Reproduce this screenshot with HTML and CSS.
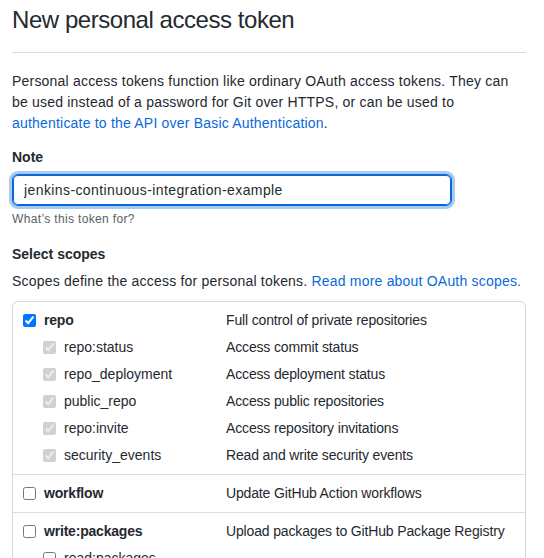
FILE: index.html
```html
<!DOCTYPE html>
<html lang="en">
<head>
<meta charset="utf-8">
<title>New personal access token</title>
<link rel="stylesheet" href="styles.css">
</head>
<body>
<div class="page">
  <div class="subhead">
    <h1 class="subhead-heading">New personal access token</h1>
  </div>
  <p class="intro">Personal access tokens function like ordinary OAuth access tokens. They can be used instead of a password for Git over HTTPS, or can be used to <a href="#">authenticate to the API over Basic Authentication</a>.</p>

  <div class="form-group">
    <label class="field-label" for="note">Note</label>
    <input class="text-input" id="note" type="text" value="jenkins-continuous-integration-example">
    <p class="field-note">What’s this token for?</p>
  </div>

  <h2 class="field-label scopes-title">Select scopes</h2>
  <p class="scopes-desc">Scopes define the access for personal tokens. <a href="#">Read more about OAuth scopes.</a></p>

  <div class="scopes">
    <div class="group">
      <div class="row">
        <label class="scope main"><input type="checkbox" checked><span>repo</span></label>
        <span class="desc">Full control of private repositories</span>
      </div>
      <div class="row">
        <label class="scope sub"><input type="checkbox" checked disabled><span>repo:status</span></label>
        <span class="desc">Access commit status</span>
      </div>
      <div class="row">
        <label class="scope sub"><input type="checkbox" checked disabled><span>repo_deployment</span></label>
        <span class="desc">Access deployment status</span>
      </div>
      <div class="row">
        <label class="scope sub"><input type="checkbox" checked disabled><span>public_repo</span></label>
        <span class="desc">Access public repositories</span>
      </div>
      <div class="row">
        <label class="scope sub"><input type="checkbox" checked disabled><span>repo:invite</span></label>
        <span class="desc">Access repository invitations</span>
      </div>
      <div class="row">
        <label class="scope sub"><input type="checkbox" checked disabled><span>security_events</span></label>
        <span class="desc">Read and write security events</span>
      </div>
    </div>
    <div class="group">
      <div class="row">
        <label class="scope main"><input type="checkbox"><span>workflow</span></label>
        <span class="desc">Update GitHub Action workflows</span>
      </div>
    </div>
    <div class="group">
      <div class="row">
        <label class="scope main"><input type="checkbox"><span>write:packages</span></label>
        <span class="desc">Upload packages to GitHub Package Registry</span>
      </div>
      <div class="row">
        <label class="scope sub"><input type="checkbox"><span>read:packages</span></label>
        <span class="desc"></span>
      </div>
    </div>
  </div>
</div>
</body>
</html>
```

FILE: styles.css
```css
html, body {
  margin: 0;
  padding: 0;
  overflow: hidden;
  background: #ffffff;
}

body {
  font-family: "Liberation Sans", Arial, sans-serif;
  font-size: 14px;
  line-height: 21px;
  color: #24292f;
}

a {
  color: #0969da;
  text-decoration: none;
}

.page {
  padding: 5px 18px 0 12px;
}

.subhead {
  padding-bottom: 17px;
  border-bottom: 1px solid #d8dee4;
}

.subhead-heading {
  margin: 0;
  font-size: 24px;
  line-height: 30px;
  font-weight: 400;
  letter-spacing: -0.45px;
}

.intro {
  margin: 18px 0 0;
  letter-spacing: 0.2px;
}

.form-group {
  margin-top: 13px;
}

.field-label {
  display: block;
  margin: 0 0 6px;
  font-size: 14px;
  line-height: 21px;
  font-weight: 700;
}

.text-input {
  display: block;
  box-sizing: border-box;
  width: 440px;
  height: 32px;
  margin: 0;
  padding: 5px 11px;
  font-family: inherit;
  font-size: 14px;
  line-height: 20px;
  letter-spacing: 0.4px;
  color: #24292f;
  background: #ffffff;
  border: 1px solid #0969da;
  border-radius: 6px;
  box-shadow: inset 0 0 0 1px #0969da, 0 0 0 3px rgba(9, 105, 218, 0.35);
  outline: none;
}

.field-note {
  margin: 4px 0 0;
  font-size: 12px;
  line-height: 18px;
  letter-spacing: 0.35px;
  color: #57606a;
}

.scopes-title {
  margin: 16px 0 0;
}

.scopes-desc {
  margin: 6px 0 0;
  letter-spacing: 0.2px;
}

.scopes {
  margin-top: 9px;
  border: 1px solid #d0d7de;
  border-radius: 6px;
}

.group {
  padding: 5px 0;
  border-top: 1px solid #d8dee4;
}

.group:first-child {
  border-top: 0;
}

.row {
  display: flex;
  align-items: center;
  height: 27px;
  padding-left: 10px;
}

.scope {
  display: flex;
  align-items: center;
  gap: 8px;
  width: 203px;
  flex: none;
  line-height: 27px;
}

.scope input {
  margin: 0;
  width: 13px;
  height: 13px;
  flex: none;
}

.scope.main span {
  font-weight: 700;
  letter-spacing: -0.2px;
}

.scope.sub {
  padding-left: 20px;
  width: 183px;
}

.desc {
  line-height: 27px;
  letter-spacing: -0.15px;
  white-space: nowrap;
}
```
